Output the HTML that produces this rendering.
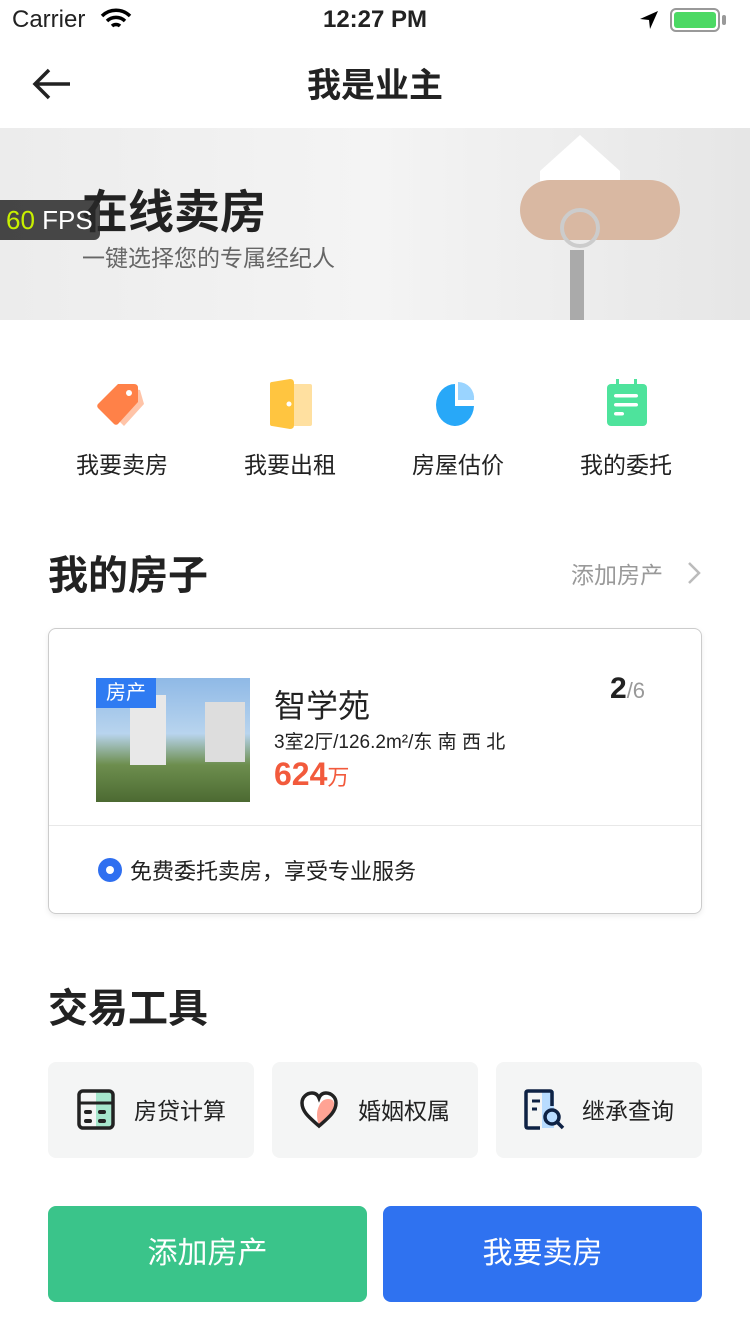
<!DOCTYPE html><html><head><meta charset="utf-8"><style>
*{margin:0;padding:0;box-sizing:border-box}
body{width:750px;height:1334px;background:#fff;font-family:"Liberation Sans","Noto Sans CJK SC",sans-serif;color:#222;position:relative;overflow:hidden}
.a{position:absolute}
</style></head><body>
<div class="a" style="left:12px;top:6px;font-size:24px">Carrier</div>
<svg class="a" style="left:100px;top:8px" width="32" height="22" viewBox="0 0 32 22"><path d="M2 8a20 20 0 0 1 28 0M7 13a13 13 0 0 1 18 0M12 18a6 6 0 0 1 8 0" stroke="#000" stroke-width="3.5" fill="none"/></svg>
<div class="a" style="left:0;width:750px;top:6px;text-align:center;font-size:24px;font-weight:bold">12:27 PM</div>
<svg class="a" style="left:638px;top:9px" width="22" height="22" viewBox="0 0 22 22"><path d="M20 2L2 10l9 1 1 9z" fill="#000"/></svg>
<div class="a" style="left:670px;top:8px;width:50px;height:24px;border:2px solid #999;border-radius:6px;padding:2px"><div style="background:#4cd964;width:100%;height:100%;border-radius:3px"></div></div>
<div class="a" style="left:722px;top:15px;width:4px;height:10px;background:#999;border-radius:2px"></div>
<svg class="a" style="left:30px;top:66px" width="44" height="36" viewBox="0 0 44 36"><path d="M40 18H5M19 4L5 18l14 14" stroke="#222" stroke-width="3.5" fill="none"/></svg>
<div class="a" style="left:0;width:750px;top:58px;text-align:center;font-size:34px;font-weight:bold">我是业主</div>
<div class="a" style="left:0;top:128px;width:750px;height:192px;background:linear-gradient(90deg,#ececec,#f4f4f4 50%,#e6e6e6)"></div>
<div class="a" style="left:540px;top:135px;width:80px;height:90px;background:#fff;clip-path:polygon(50% 0,100% 40%,100% 100%,0 100%,0 40%)"></div>
<div class="a" style="left:520px;top:180px;width:160px;height:60px;background:#d9b8a2;border-radius:30px"></div>
<div class="a" style="left:560px;top:208px;width:40px;height:40px;border:4px solid #ccc;border-radius:50%"></div>
<div class="a" style="left:570px;top:250px;width:14px;height:70px;background:#aaa"></div>
<div class="a" style="left:82px;top:176px;font-size:46px;font-weight:bold">在线卖房</div>
<div class="a" style="left:82px;top:239px;font-size:23px;color:#666">一键选择您的专属经纪人</div>
<div class="a" style="left:0;top:200px;width:100px;height:40px;background:rgba(40,40,40,.85);border-radius:0 6px 6px 0;color:#fff;font-size:26px;line-height:40px;padding-left:6px"><span style="color:#c8f000">60</span> FPS</div>
<svg class="a" style="left:94px;top:380px" width="54" height="50" viewBox="0 0 54 50"><path d="M14 30L34 8l12 2 4 14-20 22z" fill="#ffc4a8"/><path d="M4 28a3 3 0 0 1 0-4L24 4h16q4 0 4 4v14L24 44a3 3 0 0 1-4 0z" fill="#ff8148"/><circle cx="35" cy="13" r="3" fill="#fff"/></svg>
<svg class="a" style="left:270px;top:378px" width="44" height="52" viewBox="0 0 44 52"><rect x="16" y="6" width="26" height="42" rx="2" fill="#ffe0a0"/><path d="M2 4l18-3q4 0 4 4v42q0 4-4 4L2 48q-2 0-2-2V6q0-2 2-2z" fill="#ffc540"/><circle cx="19" cy="26" r="2.5" fill="#fff"/></svg>
<svg class="a" style="left:436px;top:380px" width="46" height="46" viewBox="0 0 46 46"><path d="M19 4a19 21 0 1 0 19 22H19z" fill="#28a8f8"/><path d="M22 2a16 16 0 0 1 16 18H22z" fill="#9ad4ff"/></svg>
<svg class="a" style="left:606px;top:378px" width="42" height="48" viewBox="0 0 42 48"><rect x="1" y="6" width="40" height="42" rx="4" fill="#4ee39c"/><rect x="10" y="1" width="3" height="8" fill="#4ee39c"/><rect x="28" y="1" width="3" height="8" fill="#4ee39c"/><rect x="8" y="16" width="24" height="3.5" rx="2" fill="#fff"/><rect x="8" y="25" width="24" height="3.5" rx="2" fill="#fff"/><rect x="8" y="34" width="10" height="3.5" rx="2" fill="#fff"/></svg>
<div class="a" style="top:446px;left:42px;width:160px;text-align:center;font-size:23px">我要卖房</div>
<div class="a" style="top:446px;left:210px;width:160px;text-align:center;font-size:23px">我要出租</div>
<div class="a" style="top:446px;left:378px;width:160px;text-align:center;font-size:23px">房屋估价</div>
<div class="a" style="top:446px;left:546px;width:160px;text-align:center;font-size:23px">我的委托</div>
<div class="a" style="left:48px;top:543px;font-size:40px;font-weight:bold">我的房子</div>
<div class="a" style="left:571px;top:556px;font-size:23px;color:#999">添加房产</div>
<svg class="a" style="left:684px;top:560px" width="20" height="26" viewBox="0 0 20 26"><path d="M5 3l10 10-10 10" stroke="#bbb" stroke-width="2.5" fill="none"/></svg>
<div class="a" style="left:48px;top:628px;width:654px;height:286px;border:1px solid #ccc;border-radius:8px;box-shadow:0 2px 6px rgba(0,0,0,.08)"></div>
<div class="a" style="left:96px;top:678px;width:154px;height:124px;background:linear-gradient(#8fb9e6 0,#b8d4ee 45%,#6d8e4e 70%,#4c6a32)"></div>
<div class="a" style="left:130px;top:695px;width:36px;height:70px;background:#e8e8e8"></div>
<div class="a" style="left:205px;top:702px;width:40px;height:60px;background:#ddd"></div>
<div class="a" style="left:96px;top:678px;width:60px;height:30px;background:#2f7bf2;color:#fff;font-size:20px;text-align:center;line-height:30px">房产</div>
<div class="a" style="left:274px;top:681px;font-size:32px">智学苑</div>
<div class="a" style="left:274px;top:727px;font-size:19px">3室2厅/126.2m²/东 南 西 北</div>
<div class="a" style="left:274px;top:756px;font-size:32px;color:#f25a3c;font-weight:bold">624<span style="font-size:22px;font-weight:normal">万</span></div>
<div class="a" style="left:610px;top:672px;font-size:30px;font-weight:bold">2<span style="font-size:22px;color:#999;font-weight:normal">/6</span></div>
<div class="a" style="left:49px;top:825px;width:652px;height:1px;background:#e8e8e8"></div>
<div class="a" style="left:98px;top:858px;width:24px;height:24px;border-radius:50%;background:#2f6ff0"></div>
<div class="a" style="left:106px;top:866px;width:8px;height:8px;border-radius:50%;background:#fff"></div>
<div class="a" style="left:130px;top:854px;font-size:22px">免费委托卖房，享受专业服务</div>
<div class="a" style="left:48px;top:976px;font-size:40px;font-weight:bold">交易工具</div>
<div class="a" style="left:48px;top:1062px;width:206px;height:96px;background:#f4f5f5;border-radius:8px"></div>
<div class="a" style="left:272px;top:1062px;width:206px;height:96px;background:#f4f5f5;border-radius:8px"></div>
<div class="a" style="left:496px;top:1062px;width:206px;height:96px;background:#f4f5f5;border-radius:8px"></div>
<svg class="a" style="left:76px;top:1088px" width="40" height="44" viewBox="0 0 40 44"><rect x="20" y="3" width="16" height="37" fill="#a6e6cc"/><rect x="3" y="3" width="34" height="37" rx="4" stroke="#222" stroke-width="3.5" fill="none"/><path d="M3 15h34" stroke="#222" stroke-width="3"/><rect x="8" y="22" width="8" height="4" rx="2" fill="#222"/><rect x="22" y="22" width="8" height="4" rx="2" fill="#222"/><rect x="8" y="31" width="8" height="4" rx="2" fill="#222"/><rect x="22" y="31" width="8" height="4" rx="2" fill="#222"/></svg>
<div class="a" style="left:134px;top:1092px;font-size:23px">房贷计算</div>
<svg class="a" style="left:298px;top:1090px" width="42" height="40" viewBox="0 0 42 40"><path d="M21 36C12 28 4 22 4 13 4 7 9 3 14 3q5 0 7 5 2-5 7-5c5 0 10 4 10 10 0 9-8 15-17 23z" fill="#fff"/><path d="M21 36C30 28 36 22 36 14q0-5-6-5-6 0-9 7-4 8 0 20z" fill="#ffa394"/><path d="M21 36C12 28 4 22 4 13 4 7 9 3 14 3q5 0 7 5 2-5 7-5c5 0 10 4 10 10 0 9-8 15-17 23z" stroke="#222" stroke-width="3.5" fill="none"/></svg>
<div class="a" style="left:358px;top:1092px;font-size:23px">婚姻权属</div>
<svg class="a" style="left:522px;top:1088px" width="46" height="46" viewBox="0 0 46 46"><rect x="20" y="3" width="12" height="37" fill="#b8dcff"/><path d="M30 18V5q0-2-2-2H6q-2 0-2 2v33q0 2 2 2h12" stroke="#0e2244" stroke-width="3.5" fill="none"/><path d="M10 13h8M10 21h5" stroke="#0e2244" stroke-width="3"/><circle cx="30" cy="29" r="7" fill="#b8dcff" stroke="#0e2244" stroke-width="3.5"/><path d="M35 34l6 6" stroke="#0e2244" stroke-width="3.5"/></svg>
<div class="a" style="left:582px;top:1092px;font-size:23px">继承查询</div>
<div class="a" style="left:48px;top:1206px;width:319px;height:96px;background:#3ac48a;border-radius:8px;color:#fff;font-size:30px;text-align:center;line-height:96px">添加房产</div>
<div class="a" style="left:383px;top:1206px;width:319px;height:96px;background:#2f72f0;border-radius:8px;color:#fff;font-size:30px;text-align:center;line-height:96px">我要卖房</div>
</body></html>
